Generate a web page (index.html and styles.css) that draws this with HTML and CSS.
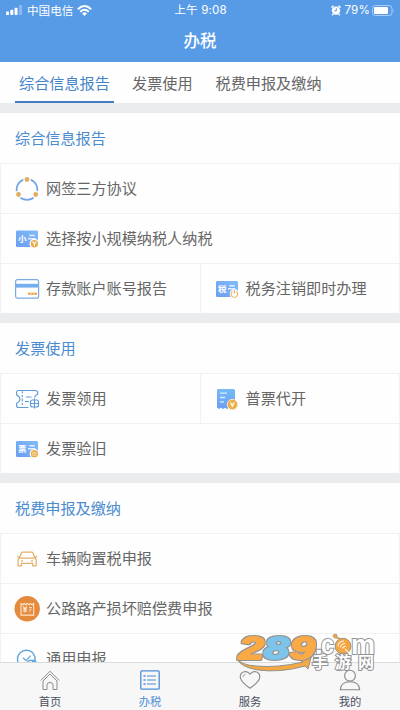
FILE: index.html
```html
<!DOCTYPE html>
<html lang="zh-CN">
<head>
<meta charset="utf-8">
<title>办税</title>
<link rel="stylesheet" href="styles.css">
</head>
<body>
<svg class="defs" aria-hidden="true">
  <defs>
    <linearGradient id="card" x1="0" y1="1" x2="1" y2="0"><stop offset="0" stop-color="#6b9df2"/><stop offset="1" stop-color="#82bcf6"/></linearGradient>
    <linearGradient id="receipt" x1="0" y1="0" x2="0" y2="1"><stop offset="0" stop-color="#74bcf8"/><stop offset="1" stop-color="#6c9cf4"/></linearGradient>
    <filter id="rim" x="-10%" y="-20%" width="120%" height="140%">
      <feMorphology in="SourceAlpha" operator="dilate" radius="1" result="wide"/>
      <feFlood flood-color="#93928e"/>
      <feComposite in2="wide" operator="in" result="edge"/>
      <feMerge><feMergeNode in="edge"/><feMergeNode in="SourceGraphic"/></feMerge>
    </filter>
  </defs>
</svg>
<div class="app">
  <header class="header">
    <div class="status">
      <div class="carrier">
        <svg class="signal" width="17" height="10"><g fill="#fff"><rect x="0" y="6.5" width="3" height="3.5" rx=".8"/><rect x="4.3" y="4.8" width="3" height="5.2" rx=".8"/><rect x="8.6" y="2.7" width="3" height="7.3" rx=".8"/><rect x="13" y="0" width="3" height="10" rx=".8" opacity=".3"/></g></svg>
        <span>中国电信</span>
        <svg class="wifi" width="15" height="11" viewBox="0 0 15 11" fill="none" stroke="#fff" stroke-width="1.9"><path d="M.8 4.2Q7.5-2 14.2 4.2M3.2 6.7Q7.5 2.8 11.8 6.7"/><path d="M5.1 8.4Q7.5 6.3 9.9 8.4L7.5 11Z" fill="#fff" stroke="none"/></svg>
      </div>
      <span class="time">上午 9:08</span>
      <div class="power">
        <svg width="10" height="11" viewBox="0 0 10 11"><circle cx="5" cy="5.6" r="4.2" fill="#fff"/><path d="M.5 2.6 2.5.8M9.5 2.6 7.5.8M2.2 9l-1 1.3M7.8 9l1 1.3" stroke="#fff" stroke-width="1.5"/><path d="M5.3 3.2v2.7H3.2" fill="none" stroke="#579be6"/></svg>
        <span class="percent">79%</span>
        <svg width="23" height="11" viewBox="0 0 23 11"><rect x=".5" y=".5" width="19.5" height="10" rx="2.8" fill="none" stroke="#a9cdf4"/><rect x="2" y="2" width="14" height="7" rx="1.2" fill="#fff"/><path d="M21.2 3.7q1.5 1.8 0 3.6Z" fill="#a9cdf4"/></svg>
      </div>
    </div>
    <h1 class="title">办税</h1>
  </header>
  <nav class="tabs"><a class="tab active">综合信息报告</a><a class="tab">发票使用</a><a class="tab">税费申报及缴纳</a></nav>
  <main class="content">
    <section class="section">
      <h2 class="heading">综合信息报告</h2>
      <div class="grid">
        <div class="cell wide">
          <svg class="icon" viewBox="0 0 26 26"><circle cx="13" cy="13.5" r="10.4" fill="none" stroke="#75a7e6" stroke-width="1.7"/><g fill="#e0ad61" stroke="#fdfdfd" stroke-width="1.4"><circle cx="13" cy="3.5" r="3.1"/><circle cx="4.5" cy="18.5" r="3.1"/><circle cx="21.7" cy="18.5" r="3.1"/></g></svg>
          <span>网签三方协议</span>
        </div>
        <div class="cell wide">
          <svg class="icon" viewBox="0 0 26 26"><rect x="2" y="4.5" width="22" height="16.5" rx="1.2" fill="url(#card)"/><text class="glyph" x="4" y="16.2">小</text><path d="M15.3 9.5h5.5M14 12.8h7.5" stroke="#e3f0ff" stroke-width="1.4"/><circle cx="20.4" cy="17.7" r="4.3" fill="#e8ac4c" stroke="#fff" stroke-width="1.2"/><path d="m18.5 15.7 1.9 2.2 1.9-2.2M20.4 18v2.3" fill="none" stroke="#fff" stroke-width="1.1"/></svg>
          <span>选择按小规模纳税人纳税</span>
        </div>
        <div class="cell">
          <svg class="icon" viewBox="0 0 26 26"><rect x="1.6" y="3.6" width="23" height="18.6" rx="2" fill="#fff" stroke="#7aace4" stroke-width="1.2"/><path d="M2 7.8h22.5v3.8H2z" fill="#76aeed"/><path d="M14 17.7h9" stroke="#e8ad58" stroke-width="2.4" stroke-dasharray="2.6 .6"/></svg>
          <span>存款账户账号报告</span>
        </div>
        <div class="cell">
          <svg class="icon" viewBox="0 0 26 26"><rect x="2" y="5" width="22" height="16" rx="1.2" fill="url(#card)"/><text class="glyph" x="4" y="16.2">税</text><path d="M15.3 9.7h5.5M14 12.8h7.5" stroke="#e3f0ff" stroke-width="1.4"/><circle cx="20.4" cy="17.9" r="4.7" fill="#fff"/><path d="M18.4 15.4a3.3 3.3 0 1 0 4 0M20.4 14v3.6" fill="none" stroke="#e8b45c" stroke-width="1.1"/></svg>
          <span>税务注销即时办理</span>
        </div>
      </div>
    </section>
    <section class="section">
      <h2 class="heading">发票使用</h2>
      <div class="grid">
        <div class="cell">
          <svg class="icon" viewBox="0 0 26 26" fill="none" stroke="#609bda" stroke-width="1.15"><path d="M14.5 21.5H4.6Q2.6 21.5 2.6 19.5v-2.2Q6.2 15.5 5.9 12.9 5.7 10.3 2.6 9V6.5Q2.6 4.5 4.6 4.5h16.5Q23.7 4.5 23.7 7v1.2q-3 1.3-3 3.4"/><path d="M8.3 5.2v2M8.3 9v2M8.3 12.5v3M8.3 17v2M12 11h5.5M11 15.5h4"/><rect x="16.5" y="14" width="8" height="7" rx="2"/><path d="M20.5 12.5v10M16.5 17.5h8"/></svg>
          <span>发票领用</span>
        </div>
        <div class="cell">
          <svg class="icon" viewBox="0 0 26 26"><path d="M4 3h15.5q1.5 0 1.5 1.5V23l-2-1.3-2 1.3-2-1.3-2 1.3-2-1.3L9 23l-2-1.3L5 23l-2-1.5V4q0-1 1-1Z" fill="url(#receipt)"/><path d="M6 7.2h7M6 11.5h5M6 15.8h4" stroke="#d9efff" stroke-width="1.3"/><circle cx="18.4" cy="18.5" r="5.2" fill="#e8ae4c" stroke="#fbe9c8"/><path d="m16.2 16.3 2.2 2.3 2.2-2.3M16.5 19h3.8M18.4 18.6v2.6" fill="none" stroke="#fff3d8" stroke-width="1.2"/></svg>
          <span>普票代开</span>
        </div>
        <div class="cell wide">
          <svg class="icon" viewBox="0 0 26 26"><rect x="2" y="5" width="22" height="16" rx="1.2" fill="url(#card)"/><text class="glyph" x="4" y="16.2">票</text><path d="M15.3 9.7h5.5M14 12.8h7.5" stroke="#e3f0ff" stroke-width="1.4"/><circle cx="20.4" cy="17.7" r="4.2" fill="#e8ac4c" stroke="#fff" stroke-width="1.1"/><path d="M18.7 16.2h3.4v3.2h-3.4zM18.7 17.8h3.4" fill="none" stroke="#f8dba5" stroke-width=".8"/></svg>
          <span>发票验旧</span>
        </div>
      </div>
    </section>
    <section class="section">
      <h2 class="heading">税费申报及缴纳</h2>
      <div class="grid">
        <div class="cell wide">
          <svg class="icon" viewBox="0 0 26 26" fill="none" stroke="#e5b06c" stroke-width="1.25" stroke-linejoin="round"><path d="m5.2 12.2 2.1-5q.4-1 1.5-1h8.8q1.1 0 1.5 1l2.1 5M3.5 10l1.7 2.2h16L22.8 10M5.2 12.2 4 13.8v6h3.4v-2.5h11.4v2.5h3.4v-6l-1-1.6"/><path d="M7 14.8h2M17 14.8h2"/></svg>
          <span>车辆购置税申报</span>
        </div>
        <div class="cell wide">
          <svg class="icon" viewBox="0 0 26 26"><circle cx="13.2" cy="12.8" r="12.7" fill="#e38a3d"/><path d="M7 7.5v11.6h12.7V7.5l-1.5 1.2-1.6-1.2L15 8.7l-1.6-1.2-1.6 1.2-1.6-1.2-1.6 1.2Z" fill="none" stroke="#ffe5ca" stroke-width="1.1"/><path d="m9 10.4 2 2.2 2-2.2M8.8 13h4.4M8.8 15h4.4M11 12.6v4M15 11.8h3M15 14h2.4M15.4 16h.8" fill="none" stroke="#ffebd7" stroke-width="1.1"/></svg>
          <span>公路路产损坏赔偿费申报</span>
        </div>
        <div class="cell wide">
          <svg class="icon" viewBox="0 0 26 26" fill="none" stroke="#5ca5de" stroke-width="1.4"><path d="M7 20A8.8 8.8 0 1 1 21 14.5M20.5 14.5H15q-2.8 2-.7 4.5M20 14l2 2h-4"/><path d="m9 11.8 3 2.8 4.7-5" stroke-width="1.2"/></svg>
          <span>通用申报</span>
        </div>
      </div>
    </section>
  </main>
  <footer class="tabbar">
    <a class="item"><svg width="22" height="22" viewBox="0 0 22 22" fill="none" stroke="#8b8d92" stroke-width="1"><path d="M1.8 11.5 11 2.2l9.2 9.3M4 12v8.5h4v-4.8q0-2.2 3-2.2t3 2.2v4.8h4V12"/><path d="m4 12 7-7 7 7"/></svg><span>首页</span></a>
    <a class="item active"><svg width="22" height="22" viewBox="0 0 22 22" fill="none" stroke="#4d8ed2"><rect x="1.8" y="1.8" width="18.4" height="18.4" rx="1" stroke-width="1.3"/><path d="M8 7h9M8 11h9M8 15h9" stroke-width="1.2"/><path d="M4.5 7h2M4.5 11h2M4.5 15h2" stroke-width="1.5"/></svg><span>办税</span></a>
    <a class="item"><svg width="22" height="22" viewBox="0 0 22 22" fill="none" stroke="#85878c"><path d="M11 19.2Q1 12.5 1.2 7.6 1.4 3.6 5.2 2.8 8.7 2 11 5.2q2.3-3.2 5.8-2.4 3.8.8 4 4.8Q21 12.5 11 19.2Z" stroke-width="1.1"/><path d="M4 8q0-2.2 2.4-2.8" stroke-width=".8"/></svg><span>服务</span></a>
    <a class="item"><svg width="22" height="22" viewBox="0 0 22 22" fill="none" stroke="#85878c" stroke-width="1.1"><circle cx="11" cy="6.7" r="5.4"/><path d="M1.3 20.8q.4-8 9.7-8t9.7 8Z"/></svg><span>我的</span></a>
  </footer>
  <svg class="watermark" width="142" height="42" viewBox="0 0 142 42">
    <path d="M1 25.5Q5 32 20 33 42 35 67 29l-4-2 13-6-4 15-3-3Q44 40 22 37 4 34 1 25.5Z" fill="#f6a841" stroke="#93928e"/>
    <g class="numerals" filter="url(#rim)">
      <text x="3" y="25.5" textLength="25" lengthAdjust="spacingAndGlyphs" fill="#f9aa45" stroke="#f9aa45">2</text>
      <text x="28" y="25.5" textLength="25" lengthAdjust="spacingAndGlyphs" fill="#7cc4ea" stroke="#7cc4ea">8</text>
      <text x="54" y="25.5" textLength="25" lengthAdjust="spacingAndGlyphs" fill="#f9aa45" stroke="#f9aa45">9</text>
    </g>
    <text class="domain" x="79" y="20.5">.</text>
    <text class="domain" x="85" y="20.5" textLength="13" lengthAdjust="spacingAndGlyphs">c</text>
    <text class="domain" x="115" y="20.5" textLength="24" lengthAdjust="spacingAndGlyphs">m</text>
    <path d="M99 5.5q-4-3 0-4.5 3 0 2 3.5 3 0 4 2" fill="#f4a43d" stroke="#9b9284" stroke-width=".7"/><circle cx="107" cy="13.2" r="7.9" fill="#f3a641" stroke="#9b9284"/><path d="M102 13.5q0-5 6-5.5M104.5 14.5q0-3.5 4.5-4M107 15.5q0-2 3-2.5M109 16l4 4" fill="none" stroke="#fff2dc" stroke-width="1.2"/>
    <text class="brand" x="76" y="35">手游网</text>
  </svg>
</div>
</body>
</html>
```

FILE: styles.css
```css
* { box-sizing: border-box; }
body { margin: 0; font-family: "Noto Sans CJK SC", sans-serif; color: #666; }
svg { display: block; flex: none; }
.defs { position: absolute; width: 0; height: 0; }
.app { position: relative; width: 400px; height: 710px; display: flex; flex-direction: column; overflow: hidden; background: #ebeced; }
.header { flex: 0 0 62px; background: #579be6; color: #fff; }
.status { height: 20px; display: grid; grid-template-columns: 1fr auto 1fr; align-items: center; padding: 0 5px 0 6px; font-size: 11.6px; line-height: 20px; }
.carrier, .power { display: flex; align-items: center; }
.carrier { gap: 4px; }
.carrier span, .time { margin-top: -1px; }
.power { justify-content: flex-end; gap: 4px; }
.power span { margin-right: -2px; }
.time, .percent { font-family: Inter, "Noto Sans CJK SC", sans-serif; font-size: 11.6px; letter-spacing: .15px; }
.title { margin: 0; font-size: 16.5px; font-weight: 500; line-height: 41px; text-align: center; }
.tabs { flex: 0 0 41px; display: flex; gap: 15px; padding-left: 15px; background: #fefefe; }
.tab { height: 41px; padding: 0 4px; font-size: 15.15px; line-height: 40px; white-space: nowrap; }
.tab.active { width: 99px; margin-right: -1px; color: #4385cb; border-bottom: 2px solid #437fc0; }
.content { flex: 1; min-height: 0; overflow: hidden; padding-top: 10px; }
.section { margin-bottom: 10px; background: #fefefe; }
.heading { height: 50px; margin: 0; padding-left: 15px; font-size: 15.15px; font-weight: 400; line-height: 48px; color: #4b8bd0; }
.grid { display: grid; grid-template-columns: 1fr 1fr; border-left: 1px solid #f1f1f2; }
.cell { height: 50px; display: flex; align-items: center; gap: 6px; padding-left: 13px; border-top: 1px solid #f1f1f2; border-right: 1px solid #f1f1f2; font-size: 15.15px; white-space: nowrap; }
.cell span { margin-top: -3px; }
.wide { grid-column: 1 / -1; }
.icon { width: 26px; height: 26px; }
.glyph { font-size: 8.5px; font-weight: 700; fill: #fff; }
.tabbar { flex: 0 0 48px; display: flex; background: #f7f7f8; border-top: 1px solid #dadbdc; color: #4a5160; }
.item { flex: 1; display: flex; flex-direction: column; align-items: center; padding-top: 6px; font-size: 11.3px; line-height: 16px; }
.item span { margin-top: 2px; }
.item.active { color: #4b8ed4; }
.watermark { position: absolute; left: 236px; top: 633px; overflow: visible; }
.numerals { font: italic 700 32px "Liberation Sans", sans-serif; stroke-width: 1.8px; stroke-linejoin: round; }
.domain { font: 700 28px "Liberation Sans", sans-serif; fill: #fff; stroke: #979797; stroke-width: 2.2px; paint-order: stroke; }
.brand { font-size: 16px; font-weight: 700; letter-spacing: 7px; fill: #fff; stroke: #939393; stroke-width: 2px; paint-order: stroke; }
```
